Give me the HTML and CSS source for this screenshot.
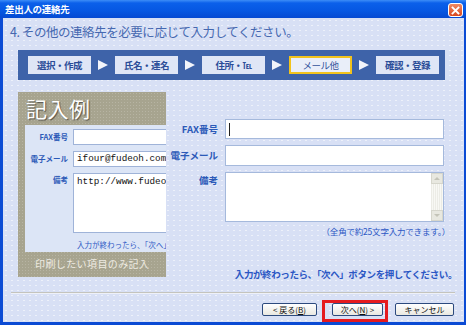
FILE: index.html
```html
<!DOCTYPE html>
<html lang="ja">
<head>
    <meta charset="UTF-8">
    <title>差出人の連絡先</title>
    <link rel="stylesheet" href="styles.css">
</head>
<body>
    <div class="window">
        <div class="titlebar">
            <span class="title">差出人の連絡先</span>
            <span class="close">
                <svg width="9" height="9" viewBox="0 0 9 9">
                    <path d="M1.5 1.5 L7.5 7.5 M7.5 1.5 L1.5 7.5" stroke="#fff" stroke-width="1.8" stroke-linecap="square"/>
                </svg>
            </span>
        </div>
        <div class="client">
            <h1 class="heading">4. その他の連絡先を必要に応じて入力してください。</h1>

            <div class="steps">
                <div class="step">選択・作成</div>
                <span class="arrow"></span>
                <div class="step">氏名・連名</div>
                <span class="arrow"></span>
                <div class="step">住所・℡</div>
                <span class="arrow"></span>
                <div class="step active">メール他</div>
                <span class="arrow"></span>
                <div class="step">確認・登録</div>
            </div>

            <div class="main">
                <div class="sample">
                    <div class="sample-title">記入例</div>
                    <div class="sample-form">
                        <div class="s-label">FAX番号</div>
                        <div class="s-input"></div>
                        <div class="s-label">電子メール</div>
                        <div class="s-input">ifour@fudeoh.com</div>
                        <div class="s-label top">備考</div>
                        <div class="s-input s-area">http://www.fudeoh.com</div>
                        <div class="s-note">入力が終わったら、「次へ」ボタンを押してください。</div>
                    </div>
                    <div class="sample-foot">印刷したい項目のみ記入</div>
                </div>

                <div class="entry">
                    <div class="fields">
                        <label class="f-label">FAX番号</label>
                        <div class="f-input"><span class="caret"></span></div>
                        <label class="f-label">電子メール</label>
                        <div class="f-input"></div>
                        <label class="f-label top">備考</label>
                        <div class="f-input f-area">
                            <div class="scrollbar">
                                <span class="sb-btn"><span class="up"></span></span>
                                <span class="sb-track"></span>
                                <span class="sb-btn"><span class="down"></span></span>
                            </div>
                        </div>
                    </div>
                    <div class="note">（全角で約25文字入力できます。）</div>
                    <div class="message">入力が終わったら、「次へ」ボタンを押してください。</div>
                </div>
            </div>

            <div class="separator"></div>

            <div class="buttons">
                <button class="btn">&lt; 戻る(<u>B</u>)</button>
                <div class="highlight">
                    <button class="btn">次へ(<u>N</u>) &gt;</button>
                </div>
                <button class="btn">キャンセル</button>
            </div>
        </div>
    </div>
</body>
</html>
```

FILE: styles.css
```css
body {
    margin: 0;
    font-family: "Noto Sans CJK JP", "Noto Sans", sans-serif;
}
.window {
    width: 466px;
    height: 325px;
    box-sizing: border-box;
    display: flex;
    flex-direction: column;
    background: #0b4bd4;
}
.titlebar {
    height: 18px;
    flex-shrink: 0;
    display: flex;
    align-items: center;
    justify-content: space-between;
    padding: 0 3px 0 5px;
    background: linear-gradient(to bottom, #3d8df7 0, #0b60ea 3px, #0657e2 60%, #0549d2 100%);
}
.title {
    color: #fff;
    font-size: 9.5px;
    font-weight: bold;
    letter-spacing: -0.3px;
}
.close {
    width: 13px;
    height: 12px;
    display: flex;
    align-items: center;
    justify-content: center;
    background: linear-gradient(to bottom, #f08a64, #d8471f);
    border: 1px solid #fff;
    border-radius: 3px;
    margin-top: 2px;
}
.client {
    flex: 1;
    margin: 0 2px 3px 3px;
    display: flex;
    flex-direction: column;
    background-color: #d8e0f5;
    background-image: radial-gradient(circle, rgba(255, 255, 255, 0.55) 0.6px, transparent 1px);
    background-size: 6px 5px;
}
.heading {
    margin: 4px 0 0 7px;
    font-size: 12.5px;
    font-weight: normal;
    line-height: 20px;
    color: #4668b0;
    letter-spacing: -0.45px;
}

/* step bar */
.steps {
    margin: 8px 0 0 15px;
    width: 427px;
    height: 30px;
    box-sizing: border-box;
    padding-left: 10px;
    display: flex;
    align-items: center;
    background: #3e63a9;
}
.step {
    width: 63px;
    height: 18px;
    box-sizing: border-box;
    display: flex;
    align-items: center;
    justify-content: center;
    background: #dfe6f6;
    color: #2b4d98;
    font-size: 9.5px;
    font-weight: bold;
    letter-spacing: -0.5px;
}
.step.active {
    border: 2px solid #f2c31c;
    background: #e9eef9;
    font-weight: normal;
    color: #34549c;
}
.arrow {
    width: 24px;
    display: flex;
    justify-content: center;
}
.arrow::before {
    content: "";
    border-left: 10px solid #f2f4fa;
    border-top: 5px solid transparent;
    border-bottom: 5px solid transparent;
}

/* main area */
.main {
    margin-top: 12px;
    height: 185px;
    display: flex;
}
.sample {
    margin-left: 15px;
    width: 148px;
    display: flex;
    flex-direction: column;
    background-color: #a7a48f;
    background-image: radial-gradient(circle, rgba(255, 255, 255, 0.18) 0.6px, transparent 1px);
    background-size: 3px 3px;
    overflow: hidden;
}
.sample-title {
    height: 33px;
    padding-left: 8px;
    font-size: 21px;
    line-height: 33px;
    color: #fff;
    letter-spacing: 0.5px;
    text-shadow: 1px 1px 1px #55524a;
}
.sample-form {
    margin-left: 7px;
    height: 127px;
    box-sizing: border-box;
    padding-top: 4px;
    display: grid;
    grid-template-columns: 43px 110px;
    grid-template-rows: 16px 16px 60px auto;
    column-gap: 5px;
    row-gap: 6px;
    background: #dce5f6;
}
.s-label {
    font-size: 7.5px;
    font-weight: bold;
    color: #2c5ab8;
    text-align: right;
    line-height: 16px;
    white-space: nowrap;
}
.s-label.top {
    line-height: 14px;
}
.s-input {
    background: #fff;
    border: 1px solid #9fb3d8;
    font-family: "Liberation Mono", "DejaVu Sans Mono", monospace;
    font-size: 9.3px;
    line-height: 14px;
    padding-left: 3px;
    white-space: nowrap;
    color: #111;
}
.s-area {
    line-height: 13px;
    padding-top: 1px;
}
.s-note {
    grid-column: 2;
    padding-left: 4px;
    font-size: 7.5px;
    line-height: 12px;
    color: #2b57c4;
    white-space: nowrap;
}
.sample-foot {
    height: 25px;
    padding-left: 17px;
    font-size: 10px;
    line-height: 24px;
    color: #eeebe2;
    letter-spacing: 0.4px;
}

/* entry form */
.entry {
    flex: 1;
    padding: 27px 12px 0 0;
    display: flex;
    flex-direction: column;
}
.fields {
    display: grid;
    grid-template-columns: 52px 219px;
    grid-template-rows: 20px 21px 50px;
    column-gap: 7px;
    row-gap: 6px;
}
.f-label {
    font-size: 9.5px;
    font-weight: bold;
    color: #2c5ab8;
    text-align: right;
    line-height: 20px;
    white-space: nowrap;
}
.f-label.top {
    line-height: 16px;
}
.f-input {
    background: #fff;
    border: 1px solid #a5b9dc;
    display: flex;
    align-items: center;
}
.caret {
    width: 1px;
    height: 13px;
    margin-left: 3px;
    background: #222;
}
.f-area {
    justify-content: flex-end;
    align-items: stretch;
}
.scrollbar {
    width: 12px;
    display: flex;
    flex-direction: column;
    background: #f3f3ee;
}
.sb-btn {
    height: 11px;
    display: flex;
    align-items: center;
    justify-content: center;
    background: #e8e8e0;
    border: 1px solid #d6d6cc;
    box-sizing: border-box;
}
.sb-track {
    flex: 1;
    background-image: repeating-linear-gradient(to right, #ecece6 0, #ecece6 1px, #f8f8f4 1px, #f8f8f4 2px);
}
.up {
    border-bottom: 3px solid #c4c4b8;
    border-left: 3px solid transparent;
    border-right: 3px solid transparent;
}
.down {
    border-top: 3px solid #c4c4b8;
    border-left: 3px solid transparent;
    border-right: 3px solid transparent;
}
.note {
    margin-top: 3px;
    margin-right: 2px;
    text-align: right;
    font-size: 8.5px;
    line-height: 12px;
    color: #2b57c4;
    letter-spacing: -0.2px;
}
.message {
    margin-top: 31px;
    margin-right: -5px;
    text-align: right;
    font-size: 9.5px;
    font-weight: bold;
    line-height: 13px;
    color: #2b57c4;
    letter-spacing: -0.4px;
}

.separator {
    margin: 15px 9px 0 8px;
    height: 1px;
    background: #c4c4bd;
    border-bottom: 1px solid #eef1f9;
}

/* dialog buttons */
.buttons {
    margin-top: 6px;
    padding-right: 10px;
    display: flex;
    justify-content: flex-end;
    align-items: flex-start;
}
.btn {
    height: 13px;
    padding: 0;
    margin-top: 3px;
    border: 1px solid #2c4a7e;
    border-radius: 2px;
    background: linear-gradient(to bottom, #ffffff, #e9e8e1);
    font-family: "Noto Sans CJK JP", sans-serif;
    font-size: 8px;
    line-height: 11px;
    color: #111;
    width: 55px;
}
.btn:last-child {
    width: 59px;
    margin-left: 7px;
}
.highlight {
    margin-left: 5px;
    border: 3px solid #e51a1e;
    padding: 0 2px 3px 0;
    width: 58px;
    display: flex;
}
.highlight .btn {
    width: 58px;
    margin-top: 0;
}
```
